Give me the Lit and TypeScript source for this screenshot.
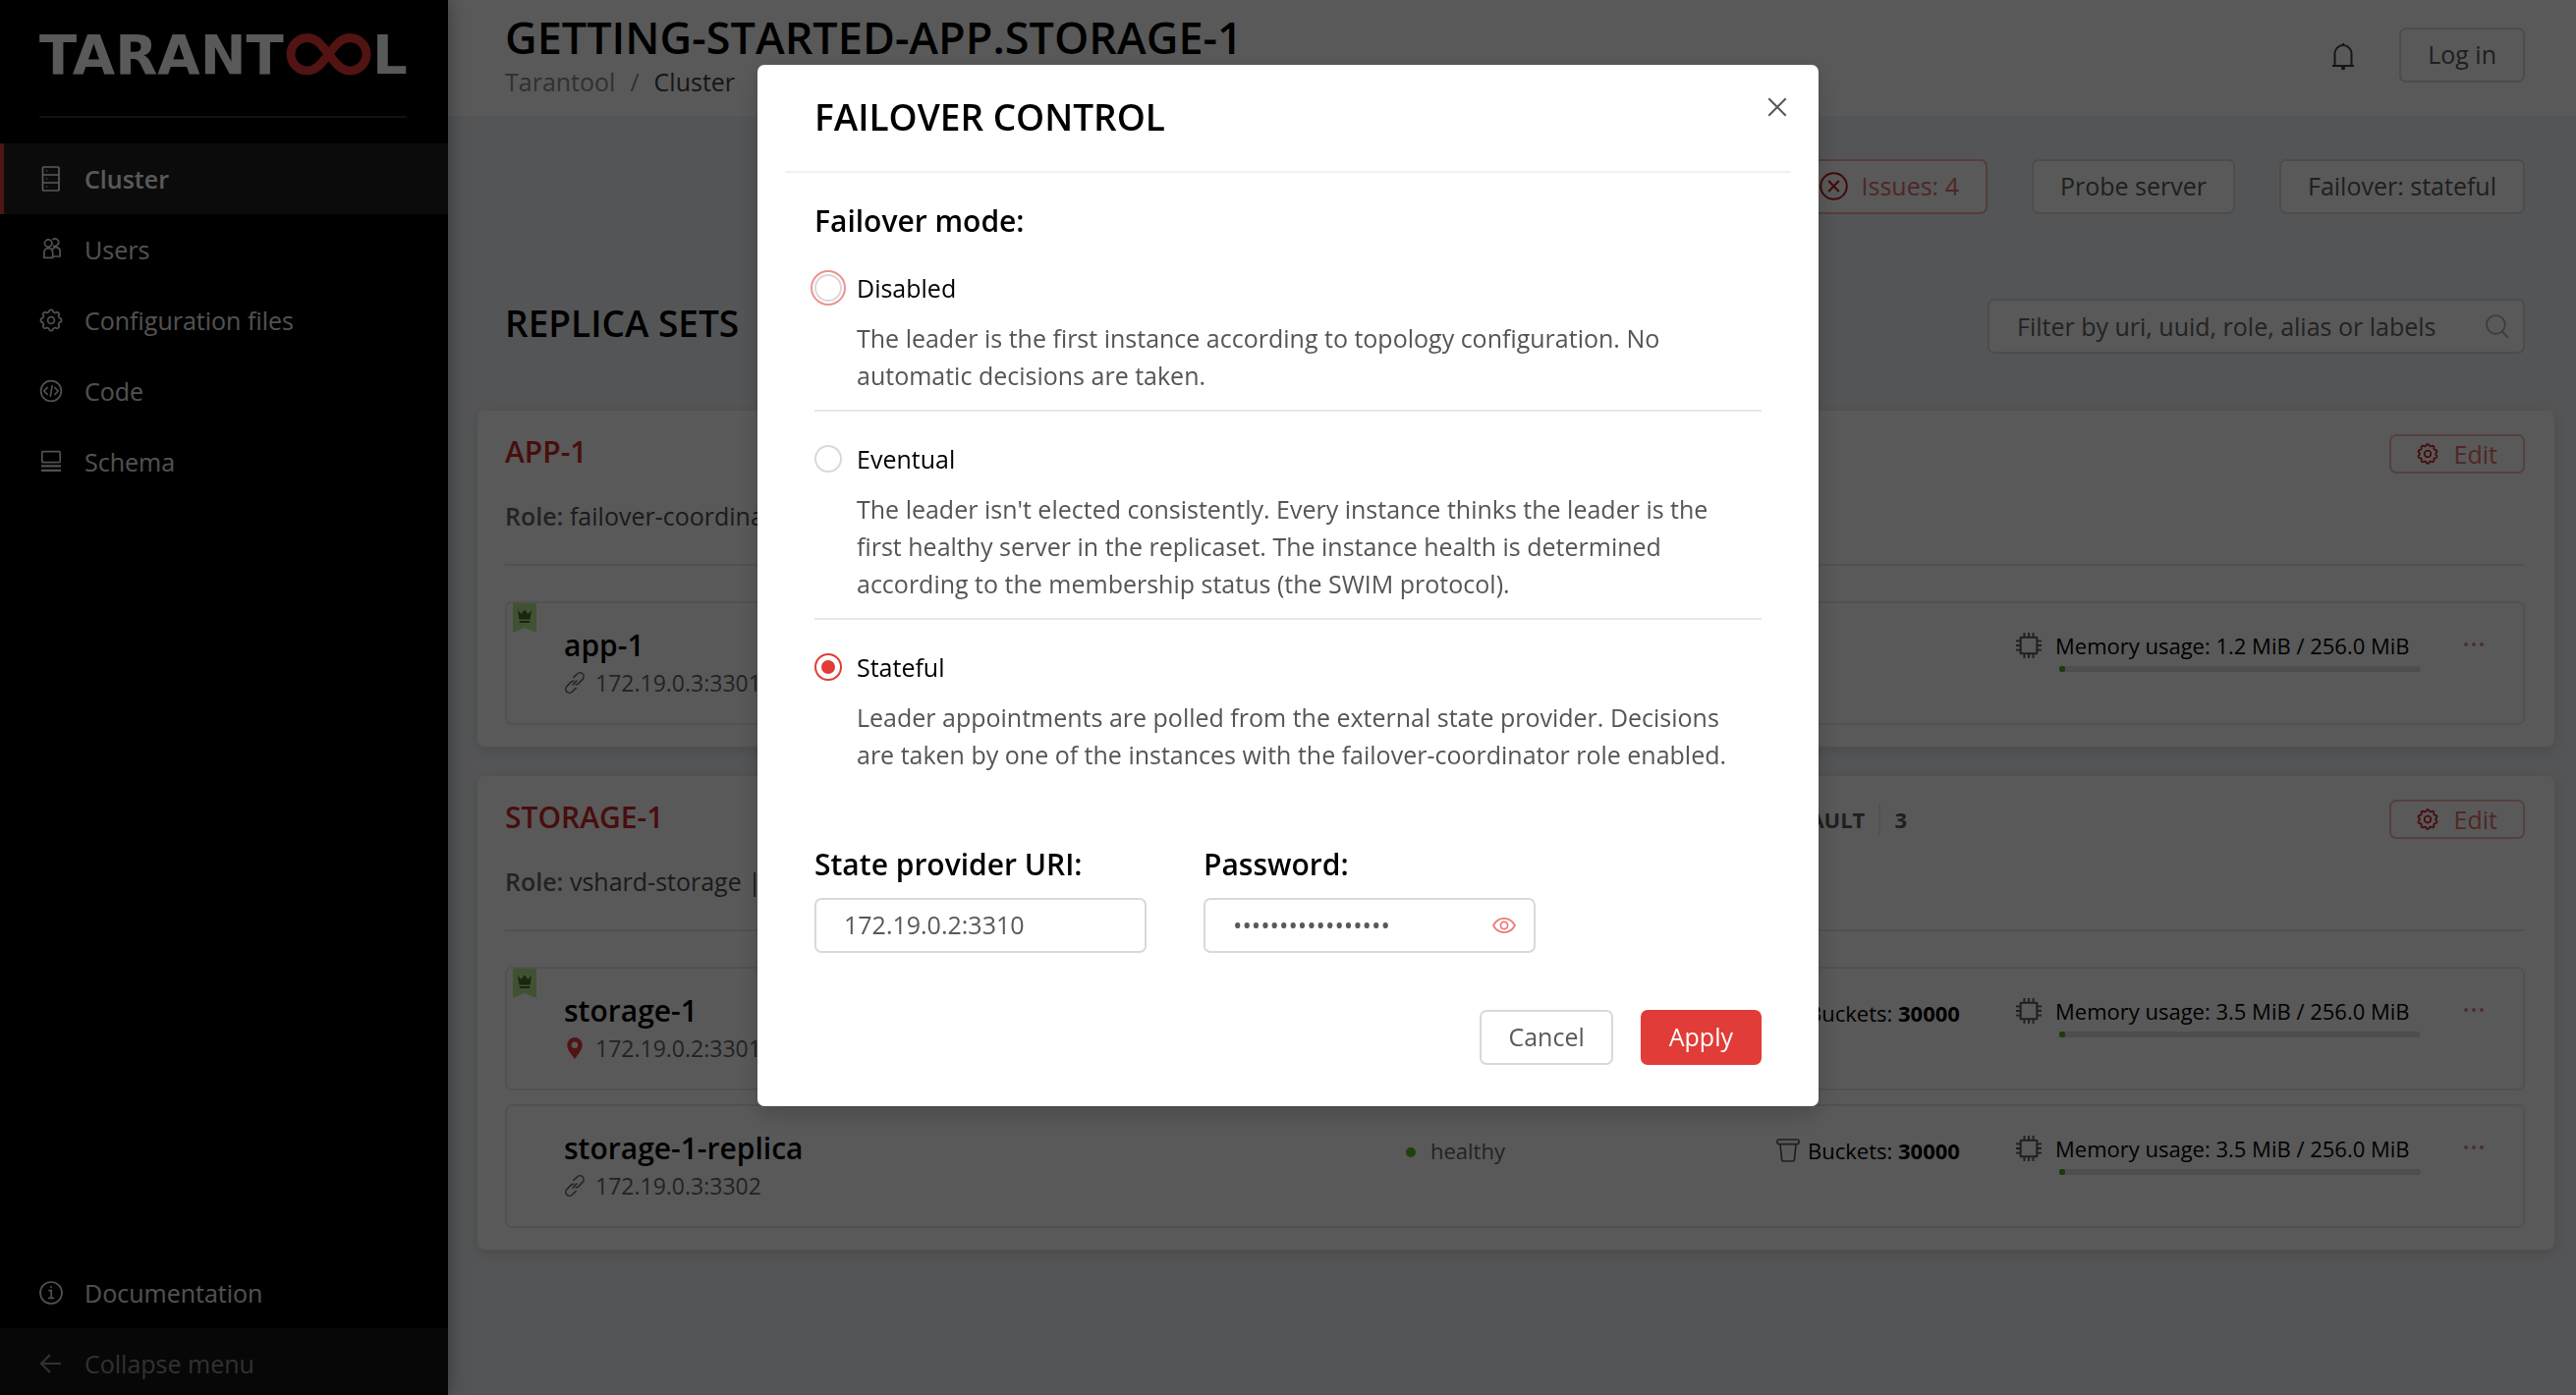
import { LitElement, html, svg, css, nothing } from "lit";
import { customElement, property, state } from "lit/decorators.js";
import { classMap } from "lit/directives/class-map.js";

/** Outline of a gear with rounded teeth, centred on (12, 12). */
function gearPath(teeth: number, radius: number, depth: number): string {
  const steps = teeth * 16;
  const points: string[] = [];
  for (let i = 0; i < steps; i++) {
    const a = (i / steps) * Math.PI * 2;
    const wave = Math.tanh(Math.cos(teeth * a) * 2.2);
    const r = radius + depth * wave;
    points.push(`${(12 + r * Math.sin(a)).toFixed(2)} ${(12 - r * Math.cos(a)).toFixed(2)}`);
  }
  return `M${points.join("L")}Z`;
}

const GEAR = gearPath(8, 9.6, 1);
const GEAR_FINE = gearPath(10, 9.8, 0.9);

const icons = {
  cluster: svg`<rect x="3.5" y="0" width="16.5" height="24" rx="1"/><path d="M3.5 8H20M3.5 16H20"/><path d="M7.2 4h1M7.2 12h1M7.2 20h1" stroke-width="1.4"/>`,
  users: svg`<circle cx="9.2" cy="5.6" r="3.7"/><path d="M4.9 20.4V15a4.4 4.4 0 0 1 8.8 0v5.4z"/><path d="M13.2 2.2A3.7 3.7 0 1 1 14 7.9"/><path d="M13.4 12.2a4 4 0 0 1 7.7 1.6V19h-7.2"/>`,
  gear: svg`<path d=${GEAR}/><circle cx="12" cy="12" r="3.4"/>`,
  gearFine: svg`<g stroke-width="2"><path d=${GEAR_FINE}/><circle cx="12" cy="12" r="3.6"/></g>`,
  code: svg`<circle cx="12" cy="12" r="10.4"/><path d="M8.6 8 4.9 12l3.7 4M15.4 8l3.7 4-3.7 4M13.2 6.2l-2 11.6"/>`,
  schema: svg`<rect x="2.8" y="1.6" width="18.4" height="11" rx="1"/><path d="M2 16.4h20M2 20.8h20" stroke-width="2.2"/>`,
  info: svg`<circle cx="12" cy="12" r="11"/><path d="M9.4 9.6h2.8v7.6M9 17.4h6.2"/><path d="M11.2 6h1.4" stroke-width="2"/>`,
  back: svg`<path d="M22 12H2M11 3 2 12l9 9" stroke-width="2.2"/>`,
  bell: svg`<path d="M1 23h22M3.5 23V10.6a8.5 8.5 0 0 1 17 0V23M12 2V0" stroke-width="2"/><path d="M10 23.6h4v1.6a2 2 0 0 1-4 0z" fill="currentColor" stroke="none"/>`,
  search: svg`<circle cx="10.4" cy="10.4" r="9.4"/><path d="m16.8 17.4 6 6.2"/>`,
  issue: svg`<circle cx="12" cy="12" r="11"/><path d="m7.6 7.4 8.8 9.2m0-9.2-8.8 9.2"/>`,
  link: svg`<path d="m10.2 6.4 4.5-4.2a4.1 4.1 0 0 1 6.2 5.6l-4.6 4.9a4 4 0 0 1-3.6 1.2"/><path d="m13.8 17.6-4.5 4.2a4.1 4.1 0 0 1-6.2-5.6l4.6-4.9a4 4 0 0 1 3.6-1.2"/><path d="m9.4 14.8 5.2-5.6"/>`,
  pin: svg`<path fill="currentColor" stroke="none" fill-rule="evenodd" d="M12 0a8.4 8.4 0 0 1 8.400 8.600C20.400 14 15.500 18.500 12 24 8.500 18.500 3.600 14 3.600 8.600A8.400 8.400 0 0 1 12 0zm0 4.800a3.600 3.600 0 1 0 0 7.200 3.600 3.600 0 0 0 0-7.200z"/>`,
  bucket: svg`<rect x="1" y="1" width="22" height="4.600" rx="1.500"/><path d="m4 6 1.600 15.500a1.800 1.800 0 0 0 1.800 1.500h9.200a1.800 1.800 0 0 0 1.800-1.500L20 6"/>`,
  chip: svg`<rect x="4.300" y="4.300" width="15.400" height="15.400" rx=".6" stroke-width="1.900"/><path d="M7.800 0v3.600M12 0v3.600M16.200 0v3.600M7.800 20.400V24M12 20.400V24M16.200 20.400V24M0 7.800h3.600M0 12h3.600M0 16.200h3.600M20.400 7.800H24M20.400 12H24M20.400 16.200H24"/>`,
  eye: svg`<path d="M1 12C3.500 7.300 7.400 4.900 12 4.900S20.500 7.300 23 12c-2.500 4.700-6.400 7.100-11 7.100S3.500 16.700 1 12z"/><circle cx="12" cy="12" r="3.600"/>`,
  close: svg`<path d="m2.500 2.500 19 19m0-19-19 19" stroke-width="2.300"/>`,
};

type IconName = keyof typeof icons;

@customElement("ui-icon")
class UiIcon extends LitElement {
  @property() name: IconName = "gear";

  static styles = css`
    :host {
      display: inline-flex;
      flex: none;
      width: 24px;
      height: 24px;
    }
    .glyph {
      width: 100%;
      height: 100%;
      overflow: visible;
      fill: none;
      stroke: currentColor;
      stroke-width: 1.7;
    }
  `;

  render() {
    return html`<svg class="glyph" viewBox="0 0 24 24" aria-hidden="true">${icons[this.name]}</svg>`;
  }
}

interface Server {
  name: string;
  uri: string;
  leader: boolean;
  self: boolean;
  buckets?: number;
  used: number;
  total: number;
}

interface ReplicaSet {
  name: string;
  roles: string;
  group?: string;
  weight?: number;
  servers: Server[];
}

const replicaSets: ReplicaSet[] = [
  {
    name: "APP-1",
    roles: "failover-coordinator",
    servers: [{ name: "app-1", uri: "172.19.0.3:3301", leader: true, self: false, used: 1.2, total: 256 }],
  },
  {
    name: "STORAGE-1",
    roles: "vshard-storage |",
    group: "DEFAULT",
    weight: 3,
    servers: [
      { name: "storage-1", uri: "172.19.0.2:3301", leader: true, self: true, buckets: 30000, used: 3.5, total: 256 },
      { name: "storage-1-replica", uri: "172.19.0.3:3302", leader: false, self: false, buckets: 30000, used: 3.5, total: 256 },
    ],
  },
];

@customElement("side-menu")
class SideMenu extends LitElement {
  static styles = css`
    :host {
      display: flex;
      flex-direction: column;
      flex: none;
      width: 456px;
      background: #000;
      color: #e8e8e8;
      box-shadow: 0 0 18px rgba(0, 20, 50, 0.4);
      z-index: 1;
    }
    .brand {
      margin: 0 42px 26px 40px;
      height: 118px;
      border-bottom: 2px solid #333;
    }
    .logo {
      display: block;
      width: 374px;
      height: 110px;
    }
    .word {
      font: 700 56px "DejaVu Sans", sans-serif;
      fill: #fff;
    }
    .loop {
      fill: none;
      stroke: #e83a36;
      stroke-width: 9;
    }
    .item {
      display: flex;
      align-items: center;
      gap: 22px;
      box-sizing: border-box;
      width: 100%;
      height: 72px;
      padding: 0 40px;
      border: 0;
      background: none;
      color: inherit;
      font: 400 25px/36px "Open Sans", sans-serif;
      text-align: left;
      text-decoration: none;
    }
    .active {
      padding-left: 36px;
      border-left: 4px solid #e13c37;
      background: #212121;
      color: #fff;
      font-weight: 600;
    }
    .bottom {
      margin-top: auto;
    }
    .collapse {
      height: 68px;
      padding-top: 4px;
      background: #151515;
      color: #8c8c8c;
    }
  `;

  render() {
    const items: [IconName, string][] = [
      ["cluster", "Cluster"],
      ["users", "Users"],
      ["gear", "Configuration files"],
      ["code", "Code"],
      ["schema", "Schema"],
    ];
    return html`
      <div class="brand">
        <svg class="logo" viewBox="0 0 374 110" role="img" aria-label="Tarantool">
          <text class="word" x="0" y="75">TARANT</text>
          <path class="loop" d="M294.500 55.200C286 44 281 38.500 273 38.500a17 16.700 0 0 0 0 33.400C281 71.900 286 66.500 294.500 55.200S308 38.500 316 38.500a17 16.700 0 0 1 0 33.400C308 71.900 303 66.500 294.500 55.200z" />
          <text class="word" x="339" y="75">L</text>
        </svg>
      </div>
      <nav>
        ${items.map(
          ([icon, label], i) => html`<a href="#" class=${classMap({ item: true, active: i === 0 })}>
            <ui-icon name=${icon}></ui-icon>${label}
          </a>`,
        )}
      </nav>
      <div class="bottom">
        <a href="#" class="item"><ui-icon name="info"></ui-icon>Documentation</a>
        <button type="button" class="item collapse"><ui-icon name="back"></ui-icon>Collapse menu</button>
      </div>
    `;
  }
}

@customElement("replica-set-card")
class ReplicaSetCard extends LitElement {
  @property({ attribute: false }) data!: ReplicaSet;

  static styles = css`
    :host {
      display: block;
      padding: 24px 30px 22px 28px;
      border-radius: 7px;
      background: #fff;
      box-shadow: 0 4px 14px rgba(0, 0, 0, 0.12);
    }
    .head {
      display: grid;
      grid-template-columns: 1287fr 631fr auto;
      align-items: center;
    }
    .title {
      align-self: start;
      margin: 0;
      color: #cf2a26;
      font-size: 30px;
      font-weight: 600;
      line-height: 36px;
    }
    .group {
      display: flex;
      align-items: center;
      color: #595959;
      font-size: 22px;
      font-weight: 700;
      line-height: 32px;
    }
    .weight {
      margin-left: 14px;
      padding-left: 14px;
      border-left: 2px solid #e8e8e8;
    }
    .edit {
      display: flex;
      align-items: center;
      grid-column: 3;
      gap: 16px;
      box-sizing: border-box;
      height: 40px;
      padding: 0 26px;
      border: 2px solid #f5b7b5;
      border-radius: 7px;
      background: #fff;
      color: #e5706c;
      font: 400 25px/36px "Open Sans", sans-serif;
    }
    .edit ui-icon {
      width: 22px;
      height: 22px;
      color: #c92420;
    }
    .roles {
      margin: 25px 0 30px;
      color: #4d4d4d;
      font-size: 25px;
      line-height: 37px;
      white-space: nowrap;
    }
    .roles b {
      color: #666;
      font-weight: 600;
    }
    .servers {
      display: flex;
      flex-direction: column;
      gap: 14px;
      margin: 0;
      padding: 36px 0 0;
      border-top: 2px solid #e8e8e8;
      list-style: none;
    }
    .server {
      position: relative;
      display: grid;
      grid-template-columns: 857fr 377fr 244fr 412px 104px;
      align-items: start;
      box-sizing: border-box;
      height: 126px;
      padding: 23px 0 0 58px;
      border: 2px solid #e8e8e8;
      border-radius: 7px;
    }
    .ribbon {
      position: absolute;
      top: 0;
      left: 6px;
      width: 24px;
      height: 30px;
    }
    .name {
      margin: 0;
      color: #000;
      font-size: 30px;
      font-weight: 600;
      line-height: 40px;
    }
    .uri {
      display: flex;
      align-items: center;
      gap: 10px;
      color: #666;
      font-size: 23px;
      line-height: 36px;
    }
    .uri ui-icon {
      width: 22px;
      height: 24px;
    }
    .uri .self {
      color: #e13c37;
    }
    .status,
    .buckets,
    .memory {
      display: flex;
      align-items: center;
      font-size: 22px;
      line-height: 32px;
    }
    .status {
      gap: 15px;
      padding-top: 6px;
      color: #666;
    }
    .dot {
      width: 10px;
      height: 10px;
      margin-top: 4px;
      border-radius: 50%;
      background: #52c41a;
    }
    .buckets {
      gap: 8px;
      padding-top: 6px;
      color: #000;
    }
    .buckets ui-icon,
    .memory ui-icon {
      color: #595959;
    }
    .memory {
      gap: 14px;
      padding-top: 4px;
      color: #000;
    }
    .memory ui-icon {
      width: 26px;
      height: 26px;
    }
    .bar {
      height: 6px;
      margin: 5px 0 0 44px;
      border-radius: 3px;
      background: #dedede;
    }
    .fill {
      min-width: 6px;
      height: 100%;
      border-radius: 2px;
      background: #52a620;
    }
    .menu {
      display: flex;
      justify-content: space-between;
      width: 24px;
      height: 24px;
      align-items: center;
      margin: 7px 0 0 42px;
      padding: 0 2px;
      border: 0;
      background: none;
    }
    .menu i {
      width: 4px;
      height: 4px;
      border-radius: 50%;
      background: #d88;
    }
  `;

  private server(s: Server) {
    return html`
      <li class="server">
        ${s.leader
          ? html`<svg class="ribbon" viewBox="0 0 24 30" aria-hidden="true">
              <path fill="#b7eb8f" d="M0 0h24v30l-12-5-12 5z" />
              <path fill="#4a6b35" d="m5 7 3.500 4L12 6.500 15.500 11 19 7l-1.400 9.500H6.400zM6.800 18h10.400v2H6.800z" />
            </svg>`
          : nothing}
        <div>
          <h3 class="name">${s.name}</h3>
          <div class="uri">
            <ui-icon class=${classMap({ self: s.self })} name=${s.self ? "pin" : "link"}></ui-icon>${s.uri}
          </div>
        </div>
        <div class="status"><span class="dot"></span>healthy</div>
        <div class="buckets">
          ${s.buckets
            ? html`<ui-icon name="bucket"></ui-icon><span>Buckets: <b>${s.buckets}</b></span>`
            : nothing}
        </div>
        <div>
          <div class="memory">
            <ui-icon name="chip"></ui-icon>
            <span>Memory usage: ${s.used.toFixed(1)} MiB / ${s.total.toFixed(1)} MiB</span>
          </div>
          <div class="bar"><div class="fill" style="width:${(s.used / s.total) * 100}%"></div></div>
        </div>
        <button type="button" class="menu" aria-label="Server actions"><i></i><i></i><i></i></button>
      </li>
    `;
  }

  render() {
    const d = this.data;
    return html`
      <div class="head">
        <h2 class="title">${d.name}</h2>
        ${d.group
          ? html`<div class="group"><span>${d.group}</span><span class="weight">${d.weight}</span></div>`
          : nothing}
        <button type="button" class="edit"><ui-icon name="gearFine"></ui-icon>Edit</button>
      </div>
      <p class="roles"><b>Role:</b> ${d.roles}</p>
      <ul class="servers">
        ${d.servers.map((s) => this.server(s))}
      </ul>
    `;
  }
}

interface Mode {
  id: string;
  label: string;
  text: string;
}

const modes: Mode[] = [
  {
    id: "disabled",
    label: "Disabled",
    text: "The leader is the first instance according to topology configuration. No automatic decisions are taken.",
  },
  {
    id: "eventual",
    label: "Eventual",
    text: "The leader isn't elected consistently. Every instance thinks the leader is the first healthy server in the replicaset. The instance health is determined according to the membership status (the SWIM protocol).",
  },
  {
    id: "stateful",
    label: "Stateful",
    text: "Leader appointments are polled from the external state provider. Decisions are taken by one of the instances with the failover-coordinator role enabled.",
  },
];

@customElement("failover-dialog")
class FailoverDialog extends LitElement {
  @state() private mode = "stateful";
  @state() private highlighted = "disabled";
  @state() private revealed = false;

  static styles = css`
    :host {
      position: fixed;
      inset: 0;
      z-index: 10;
      overflow: auto;
      background: rgba(0, 0, 0, 0.65);
    }
    .panel {
      box-sizing: border-box;
      width: 1080px;
      max-width: 100%;
      margin: 66px auto 0;
      border-radius: 7px;
      background: #fff;
      box-shadow: 0 8px 24px rgba(0, 0, 0, 0.2);
      color: #000;
    }
    .head {
      display: flex;
      align-items: center;
      justify-content: space-between;
      margin: 0 28px;
      padding: 28px 0 30px 30px;
      border-bottom: 2px solid #f0f0f0;
    }
    .title {
      margin: 0;
      font-size: 37px;
      font-weight: 600;
      line-height: 50px;
    }
    .close {
      display: flex;
      align-self: flex-start;
      margin-top: 1px;
      padding: 3px;
      border: 0;
      background: none;
      color: #595959;
    }
    .close ui-icon {
      width: 22px;
      height: 22px;
    }
    .body {
      padding: 29px 58px 42px;
    }
    fieldset {
      margin: 0;
      padding: 0;
      border: 0;
    }
    legend,
    .label {
      display: block;
      padding: 0;
      font-size: 30px;
      font-weight: 600;
      line-height: 40px;
    }
    .option {
      padding: 28px 0 15px;
      border-bottom: 2px solid #e8e8e8;
    }
    .option:last-child {
      padding-bottom: 0;
      border-bottom: 0;
    }
    .choice {
      display: flex;
      align-items: center;
      gap: 15px;
      font-size: 25px;
      line-height: 40px;
    }
    .radio {
      display: grid;
      place-items: center;
      box-sizing: border-box;
      width: 28px;
      height: 28px;
      margin: 0;
      border: 2px solid #d9d9d9;
      border-radius: 50%;
      background: #fff;
      appearance: none;
    }
    .radio:checked {
      border-color: #e13c37;
    }
    .radio:checked::before {
      content: "";
      width: 14px;
      height: 14px;
      border-radius: 50%;
      background: #e13c37;
    }
    .ring {
      outline: 2px solid #f0928f;
      outline-offset: 2px;
    }
    .text {
      margin: 12px 0 1px 43px;
      padding-right: 12px;
      color: #555;
      font-size: 25px;
      line-height: 38px;
    }
    .fields {
      display: flex;
      gap: 58px;
      margin-top: 72px;
    }
    .field {
      width: 338px;
    }
    .box {
      display: flex;
      align-items: center;
      box-sizing: border-box;
      height: 56px;
      margin-top: 14px;
      padding: 0 18px 0 28px;
      border: 2px solid #d9d9d9;
      border-radius: 7px;
    }
    .input {
      flex: 1;
      min-width: 0;
      padding: 0 0 2px;
      border: 0;
      outline: 0;
      background: none;
      color: #595959;
      font: 400 25px/36px "Open Sans", sans-serif;
    }
    .reveal {
      display: flex;
      padding: 0;
      border: 0;
      background: none;
      color: #ec7a77;
    }
    .actions {
      display: flex;
      justify-content: flex-end;
      gap: 28px;
      margin-top: 58px;
    }
    .button {
      box-sizing: border-box;
      height: 56px;
      padding: 0 27px 2px;
      border: 2px solid #d9d9d9;
      border-radius: 7px;
      background: #fff;
      color: #595959;
      font: 400 25px/36px "Open Sans", sans-serif;
    }
    .primary {
      border-color: #e13c37;
      background: #e13c37;
      color: #fff;
    }
  `;

  render() {
    return html`
      <section class="panel" role="dialog" aria-modal="true" aria-labelledby="dialog-title">
        <div class="head">
          <h2 class="title" id="dialog-title">FAILOVER CONTROL</h2>
          <button type="button" class="close" aria-label="Close"><ui-icon name="close"></ui-icon></button>
        </div>
        <form class="body" @submit=${(e: Event) => e.preventDefault()}>
          <fieldset>
            <legend>Failover mode:</legend>
            ${modes.map(
              (m) => html`<div class="option">
                <label class="choice" for=${m.id}>
                  <input
                    type="radio"
                    name="mode"
                    id=${m.id}
                    class=${classMap({ radio: true, ring: this.highlighted === m.id })}
                    aria-describedby="${m.id}-text"
                    .checked=${this.mode === m.id}
                    @change=${() => {
                      this.mode = m.id;
                      this.highlighted = m.id;
                    }}
                  />${m.label}
                </label>
                <p class="text" id="${m.id}-text">${m.text}</p>
              </div>`,
            )}
          </fieldset>
          <div class="fields">
            <div class="field">
              <label class="label" for="uri">State provider URI:</label>
              <div class="box"><input class="input" id="uri" type="text" value="172.19.0.2:3310" /></div>
            </div>
            <div class="field">
              <label class="label" for="password">Password:</label>
              <div class="box">
                <input
                  class="input"
                  id="password"
                  type=${this.revealed ? "text" : "password"}
                  autocomplete="off"
                  value="aaaaaaaaaaaaaaaaa"
                />
                <button
                  type="button"
                  class="reveal"
                  aria-label="Show password"
                  @click=${() => (this.revealed = !this.revealed)}
                >
                  <ui-icon name="eye"></ui-icon>
                </button>
              </div>
            </div>
          </div>
          <div class="actions">
            <button type="button" class="button">Cancel</button>
            <button type="submit" class="button primary">Apply</button>
          </div>
        </form>
      </section>
    `;
  }
}

@customElement("app-root")
class AppRoot extends LitElement {
  static styles = css`
    :host {
      display: flex;
      min-height: 100vh;
      background: #f0f2f5;
      color: #000;
      font-family: "Open Sans", sans-serif;
    }
    .main {
      flex: 1;
      min-width: 0;
    }
    .top {
      display: flex;
      align-items: center;
      box-sizing: border-box;
      height: 118px;
      padding: 0 52px 6px 58px;
      background: #fff;
    }
    .heading {
      flex: 1;
    }
    .title {
      margin: 0;
      font-size: 45px;
      font-weight: 600;
      line-height: 54px;
    }
    .crumbs {
      display: flex;
      gap: 15px;
      color: #8c8c8c;
      font-size: 25px;
      line-height: 36px;
    }
    .crumbs a {
      color: inherit;
      text-decoration: none;
    }
    .crumbs .current {
      color: #404040;
    }
    .bell {
      display: flex;
      margin-right: 45px;
      padding: 0;
      border: 0;
      background: none;
      color: #404040;
    }
    .button {
      display: flex;
      align-items: center;
      gap: 14px;
      box-sizing: border-box;
      height: 56px;
      padding: 0 27px 2px;
      border: 2px solid #d9d9d9;
      border-radius: 7px;
      background: #fff;
      color: #595959;
      font: 400 25px/36px "Open Sans", sans-serif;
    }
    .issues {
      border-color: #f0b0ad;
      color: #e0716d;
    }
    .issues ui-icon {
      width: 29px;
      height: 29px;
      color: #b51f1b;
    }
    .content {
      padding: 44px 22px 44px 30px;
    }
    .actions,
    .section {
      display: flex;
      align-items: center;
      padding: 0 30px 0 28px;
    }
    .actions {
      justify-content: flex-end;
      gap: 45px;
    }
    .section {
      justify-content: space-between;
      margin: 86px 0 58px;
    }
    .subtitle {
      margin: 0;
      padding-bottom: 6px;
      font-size: 37px;
      font-weight: 600;
      line-height: 50px;
    }
    .search {
      display: flex;
      align-items: center;
      box-sizing: border-box;
      width: 547px;
      height: 56px;
      padding: 0 14px 0 28px;
      border: 2px solid #d9d9d9;
      border-radius: 7px;
      background: #fff;
      color: #a6a6a6;
    }
    .search input {
      flex: 1;
      min-width: 0;
      padding: 0;
      border: 0;
      outline: 0;
      background: none;
      font: 400 25px/36px "Open Sans", sans-serif;
    }
    .search input::placeholder {
      color: #666;
      opacity: 1;
    }
    .cards {
      display: flex;
      flex-direction: column;
      gap: 30px;
    }
  `;

  render() {
    return html`
      <side-menu></side-menu>
      <main class="main">
        <header class="top">
          <div class="heading">
            <h1 class="title">GETTING-STARTED-APP.STORAGE-1</h1>
            <nav class="crumbs" aria-label="Breadcrumb">
              <a href="#">Tarantool</a><span>/</span><a href="#" class="current">Cluster</a>
            </nav>
          </div>
          <button type="button" class="bell" aria-label="Notifications"><ui-icon name="bell"></ui-icon></button>
          <button type="button" class="button">Log in</button>
        </header>
        <div class="content">
          <div class="actions">
            <button type="button" class="button issues"><ui-icon name="issue"></ui-icon>Issues: 4</button>
            <button type="button" class="button">Probe server</button>
            <button type="button" class="button">Failover: stateful</button>
          </div>
          <div class="section">
            <h2 class="subtitle">REPLICA SETS</h2>
            <div class="search">
              <input type="search" aria-label="Filter" placeholder="Filter by uri, uuid, role, alias or labels" />
              <ui-icon name="search"></ui-icon>
            </div>
          </div>
          <div class="cards">
            ${replicaSets.map((r) => html`<replica-set-card .data=${r}></replica-set-card>`)}
          </div>
        </div>
      </main>
      <failover-dialog></failover-dialog>
    `;
  }
}
